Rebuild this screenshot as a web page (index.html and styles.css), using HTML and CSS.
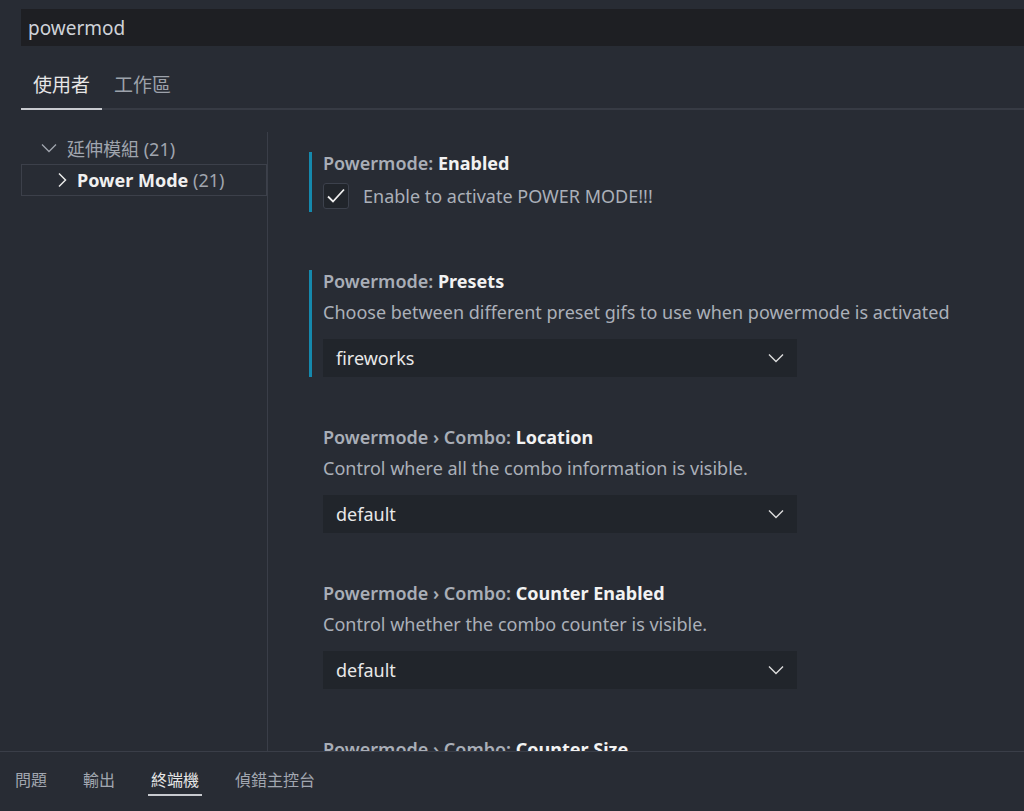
FILE: index.html
```html
<!DOCTYPE html>
<html>
<head>
<meta charset="utf-8">
<link rel="stylesheet" href="styles.css">
</head>
<body>

<div class="search">powermod</div>

<ul class="tabs">
  <li class="tab active">使用者</li>
  <li class="tab">工作區</li>
</ul>

<div class="main">
  <!-- table of contents -->
  <div class="toc">
    <div class="toc-row">
      <svg class="chev" width="16" height="16" viewBox="0 0 16 16"><path d="M1 4.5l7 7 7-7" fill="none" stroke="#a0a5ae" stroke-width="1.3"/></svg>
      <span class="toc-label">延伸模組 <span class="count">(21)</span></span>
    </div>
    <div class="toc-row selected">
      <svg class="chev" width="10" height="16" viewBox="0 0 10 16"><path d="M2 1.5l6.5 6.5-6.5 6.5" fill="none" stroke="#e8e8e8" stroke-width="1.5"/></svg>
      <span class="toc-label"><b>Power Mode</b> <span class="count">(21)</span></span>
    </div>
  </div>

  <!-- settings list -->
  <div class="settings">
    <div class="setting modified first">
      <div class="title">Powermode: <b>Enabled</b></div>
      <div class="check-row">
        <span class="checkbox">
          <svg width="20" height="20" viewBox="0 0 20 20"><path d="M2 10.5l5 5 11-12" fill="none" stroke="#f0f0f0" stroke-width="1.8"/></svg>
        </span>
        <span class="desc">Enable to activate POWER MODE!!!</span>
      </div>
    </div>

    <div class="setting modified">
      <div class="title">Powermode: <b>Presets</b></div>
      <div class="desc">Choose between different preset gifs to use when powermode is activated</div>
      <div class="select">fireworks
        <svg width="16" height="10" viewBox="0 0 16 10"><path d="M1 1.5l7 7 7-7" fill="none" stroke="#dcdcdc" stroke-width="1.4"/></svg>
      </div>
    </div>

    <div class="setting">
      <div class="title">Powermode › Combo: <b>Location</b></div>
      <div class="desc">Control where all the combo information is visible.</div>
      <div class="select">default
        <svg width="16" height="10" viewBox="0 0 16 10"><path d="M1 1.5l7 7 7-7" fill="none" stroke="#dcdcdc" stroke-width="1.4"/></svg>
      </div>
    </div>

    <div class="setting">
      <div class="title">Powermode › Combo: <b>Counter Enabled</b></div>
      <div class="desc">Control whether the combo counter is visible.</div>
      <div class="select">default
        <svg width="16" height="10" viewBox="0 0 16 10"><path d="M1 1.5l7 7 7-7" fill="none" stroke="#dcdcdc" stroke-width="1.4"/></svg>
      </div>
    </div>

    <div class="setting">
      <div class="title">Powermode › Combo: <b>Counter Size</b></div>
    </div>
  </div>
</div>

<!-- bottom panel -->
<ul class="panel">
  <li class="ptab">問題</li>
  <li class="ptab">輸出</li>
  <li class="ptab active">終端機</li>
  <li class="ptab">偵錯主控台</li>
</ul>

</body>
</html>
```

FILE: styles.css
```css
* {box-sizing: border-box;}
ul {list-style-type: none; margin: 0; padding: 0;}

body {
    margin: 0;
    height: 811px;
    overflow: hidden;
    background: #282c34;
    color: #abb2bf;
    font-family: "Noto Sans", "Noto Sans CJK TC", sans-serif;
    font-size: 18px;
    display: flex;
    flex-direction: column;
}

.search {
    margin: 9px 0 0 21px;
    height: 37px;
    line-height: 37px;
    padding: 1px 0 0 7px;
    background: #1e1f23;
    color: #cfd2d8;
    font-size: 19px;
}

.tabs {
    display: flex;
    margin: 17px 0 0 21px;
    border-bottom: 2px solid #373b44;
}

.tab {
    padding: 0 12px;
    height: 47px;
    line-height: 45px;
    font-size: 19px;
    color: #9da2ab;
    margin-bottom: -2px;
    border-bottom: 2px solid transparent;
}

.tab.active {
    color: #e6e6e6;
    border-bottom-color: #c8cacf;
}

.main {
    flex: 1;
    display: flex;
    min-height: 0;
    overflow: hidden;
}

.toc {
    width: 247px;
    margin-left: 21px;
    margin-top: 22px;
    border-right: 1px solid #3a3e48;
}

.toc-row {
    height: 32px;
    display: flex;
    align-items: center;
    color: #a0a5ae;
}

.toc-row .chev {
    margin-left: 20px;
    margin-right: 10px;
}

.toc-row.selected {
    border: 1px solid #3c404a;
    color: #f0f0f0;
}

.toc-row.selected .chev {
    margin-left: 35px;
    margin-right: 10px;
}

.toc-row b {font-weight: 700;}
.toc-row .count {color: #a0a5ae;}

.settings {
    flex: 1;
    padding: 42px 0 0 41px;
}

.setting {
    border-left: 3px solid transparent;
    padding-left: 11px;
    margin-bottom: 49px;
}

.setting.modified {border-left-color: #1589ad;}
.setting.first {margin-bottom: 58px;}

.title {
    height: 22px;
    line-height: 22px;
    font-weight: 600;
    color: #a9aeb7;
}

.title b {
    font-weight: 700;
    color: #f2f2f2;
}

.desc {
    margin-top: 9px;
    height: 22px;
    line-height: 22px;
    color: #abb0b9;
}

.check-row {
    display: flex;
    align-items: center;
    margin-top: 9px;
    height: 29px;
    padding-bottom: 3px;
}

.check-row .desc {margin: 0 0 0 14px;}

.checkbox {
    width: 26px;
    height: 26px;
    border: 1px solid #3c414c;
    border-radius: 3px;
    background: #21252b;
    display: flex;
    align-items: center;
    justify-content: center;
}

.select {
    margin-top: 16px;
    width: 474px;
    height: 38px;
    background: #21252b;
    color: #e8e8e8;
    padding: 0 13px;
    display: flex;
    align-items: center;
    justify-content: space-between;
}

.panel {
    flex: none;
    height: 60px;
    border-top: 1px solid #3a3e48;
    display: flex;
    padding-left: 12px;
    padding-top: 16px;
}

.ptab {
    padding: 0 3px;
    margin-right: 30px;
    height: 28px;
    line-height: 24px;
    font-size: 16px;
    color: #a2a7b0;
    border-bottom: 2px solid transparent;
}

.ptab.active {
    color: #e6e6e6;
    border-bottom-color: #c8cacf;
}
```
